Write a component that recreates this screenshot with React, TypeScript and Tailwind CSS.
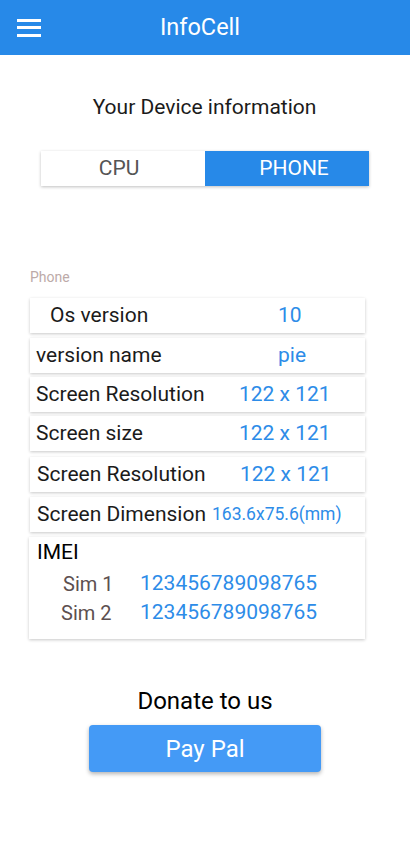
import React, { useState } from "react";

type Row = {
  label: string;
  value: string;
  labelClass: string;
  valueClass: string;
  rowClass: string;
};

const rows: Row[] = [
  { label: "Os version", value: "10", labelClass: "pl-[20px]", valueClass: "pl-[48px] text-[21px]", rowClass: "mt-[13px]" },
  { label: "version name", value: "pie", labelClass: "pl-[6px]", valueClass: "pl-[48px] text-[21px]", rowClass: "mt-[5px]" },
  { label: "Screen Resolution", value: "122 x 121", labelClass: "pl-[6px]", valueClass: "pl-[9px] text-[21px]", rowClass: "mt-[4px]" },
  { label: "Screen size", value: "122 x 121", labelClass: "pl-[6px]", valueClass: "pl-[9px] text-[21px]", rowClass: "mt-[4px]" },
  { label: "Screen Resolution", value: "122 x 121", labelClass: "pl-[7px]", valueClass: "pl-[10px] text-[21px]", rowClass: "mt-[6px]" },
  { label: "Screen Dimension", value: "163.6x75.6(mm)", labelClass: "pl-[7px]", valueClass: "-ml-[18px] text-[17.5px]", rowClass: "mt-[5px]" },
];

export default function App() {
  const [tab, setTab] = useState<"cpu" | "phone">("phone");

  return (
    <div className="w-[411px] h-[852px] bg-white font-['Roboto',sans-serif] text-[#212121] overflow-hidden">
      {/* App bar */}
      <div className="h-[55px] w-[410px] bg-[#2789e8] flex items-center relative">
        <button className="ml-[17px] w-[24px] flex flex-col gap-[4.5px]">
          <span className="block h-[3px] bg-white" />
          <span className="block h-[3px] bg-white" />
          <span className="block h-[3px] bg-white" />
        </button>
        <div className="absolute inset-0 flex items-center justify-center pointer-events-none">
          <span className="text-white text-[23.5px] pr-[10px]">InfoCell</span>
        </div>
      </div>

      <div className="w-[410px] flex flex-col items-center">
        <p className="mt-[40px] text-[21px] leading-[25px] text-[#1b1b1b] pr-[1px]">Your Device information</p>

        {/* Tabs */}
        <div className="mt-[31px] w-[328px] h-[35px] flex shadow-[0_1px_3px_rgba(0,0,0,0.25)]">
          <button
            onClick={() => setTab("cpu")}
            className={`w-[164px] flex items-center justify-center text-[21px] pr-[8px] ${tab === "cpu" ? "bg-[#2789e8] text-white" : "bg-white text-[#555555]"}`}
          >
            CPU
          </button>
          <button
            onClick={() => setTab("phone")}
            className={`w-[164px] flex items-center justify-center text-[21px] pl-[14px] ${tab === "phone" ? "bg-[#2789e8] text-white" : "bg-white text-[#555555]"}`}
          >
            PHONE
          </button>
        </div>
      </div>

      {/* Phone section */}
      <div className="mt-[83px] pl-[30px] w-[365px]">
        <p className="text-[14px] leading-[16px] text-[#bcaaa8]">Phone</p>

        {rows.map((r, i) => (
          <div
            key={i}
            className={`h-[35px] flex items-center bg-white shadow-[0_1px_3px_rgba(0,0,0,0.22)] ${r.rowClass}`}
          >
            <div className={`w-[200px] text-[21px] leading-[25px] text-[#1b1b1b] whitespace-nowrap ${r.labelClass}`}>{r.label}</div>
            <div className={`leading-[25px] text-[#2d8ce8] whitespace-nowrap ${r.valueClass}`}>{r.value}</div>
          </div>
        ))}

        {/* IMEI card */}
        <div className="mt-[5px] -ml-[1px] h-[102px] bg-white shadow-[0_1px_3px_rgba(0,0,0,0.22)] pt-[3px]">
          <p className="pl-[8px] text-[21px] leading-[25px] text-black">IMEI</p>
          <div className="mt-[7px] flex flex-col gap-[6px]">
            <div className="flex items-center h-[23px]">
              <span className="w-[111px] pl-[34px] text-[20px] text-[#5d5050]">Sim 1</span>
              <span className="text-[21px] text-[#2d8ce8]">123456789098765</span>
            </div>
            <div className="flex items-center h-[23px]">
              <span className="w-[111px] pl-[32px] text-[20px] text-[#5d5050]">Sim 2</span>
              <span className="text-[21px] text-[#2d8ce8]">123456789098765</span>
            </div>
          </div>
        </div>
      </div>

      {/* Donate */}
      <div className="w-[410px] flex flex-col items-center mt-[48px]">
        <p className="text-[24px] leading-[28px] text-black">Donate to us</p>
        <button className="mt-[10px] w-[232px] h-[47px] rounded-[4px] bg-[#449af6] text-white text-[24px] shadow-[0_2px_4px_rgba(0,0,0,0.3)]">
          Pay Pal
        </button>
      </div>
    </div>
  );
}
